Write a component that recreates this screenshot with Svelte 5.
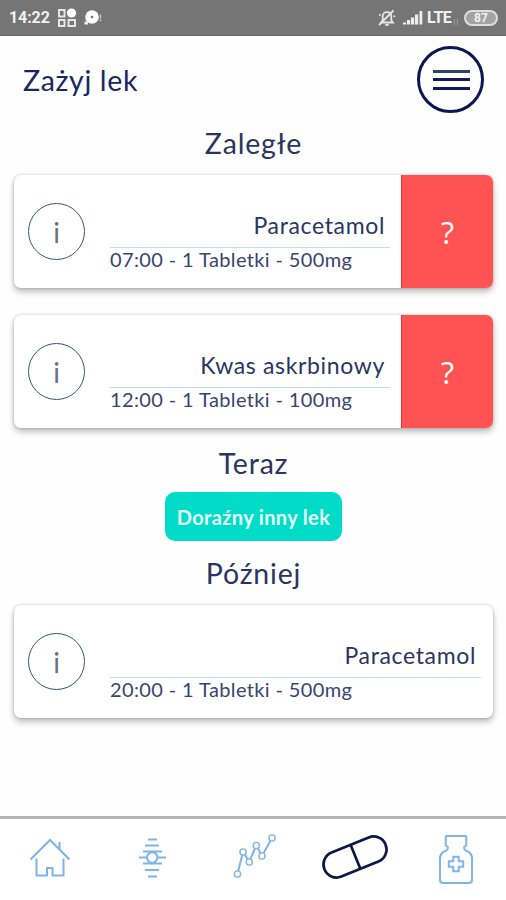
<script lang="ts">
	type Dose = { name: string; time: string; details: string };

	const overdue: Dose[] = [
		{ name: 'Paracetamol', time: '07:00', details: '1 Tabletki - 500mg' },
		{ name: 'Kwas askrbinowy', time: '12:00', details: '1 Tabletki - 100mg' }
	];

	const later: Dose[] = [
		{ name: 'Paracetamol', time: '20:00', details: '1 Tabletki - 500mg' }
	];
</script>

{#snippet card(dose: Dose, late: boolean)}
	<article class="card">
		<button class="info">i</button>
		<div class="dose">
			<div class="name">{dose.name}</div>
			<div class="details">{dose.time} - {dose.details}</div>
		</div>
		{#if late}
			<button class="confirm">?</button>
		{/if}
	</article>
{/snippet}

<div class="screen">
	<div class="status-bar">
		<span class="clock">14:22</span>
		<svg class="apps" width="20" height="20" viewBox="0 0 20 20" fill="none" stroke="#e6e6e6" stroke-width="2">
			<rect x="2" y="2" width="5.5" height="6.5" />
			<circle cx="14.5" cy="5" r="4.6" fill="#fff" stroke="none" />
			<rect x="2" y="12" width="5.5" height="6" />
			<rect x="11.5" y="12" width="6.5" height="6" />
		</svg>
		<svg class="disc" width="18" height="18" viewBox="0 0 18 18">
			<circle cx="8" cy="8" r="6.8" fill="#fff" />
			<path d="M.5 12.5h3.5v3H.5z" fill="#eee" />
			<circle cx="8" cy="8" r="1.3" fill="#757575" />
			<path d="M16.5 5.5v4M16.5 10.5v1.5" stroke="#c4c4c4" stroke-width="1.5" />
		</svg>
		<span class="spacer"></span>
		<svg width="18" height="18" viewBox="0 0 18 18" fill="none" stroke="#e6e6e6" stroke-width="1.8">
			<path d="M3 13.5h12l-1.7-2.3V7.3C13.3 4.9 11.5 3.2 9 3.2S4.7 4.9 4.7 7.3v3.9L3 13.5zM7.2 15.8h3.6M1 16L15.5 1.5M1.2 5.5l1.4 1M15.5 7.5l1.7-.5" />
		</svg>
		<svg class="signal" width="20" height="15" viewBox="0 0 20 15" fill="#eee">
			<path d="M0 12.5h3.2v2H0zM4 10h3.2v4.5H4zM8 7.5h3.2v7H8zM12 4.5h3.2v10h-3.2z" />
			<path d="M16.5 1h2.8v13.5h-2.8z" />
		</svg>
		<span class="lte">LTE</span>
		<svg class="arrows" width="6" height="8" viewBox="0 0 6 8" stroke="#9b9b9b" fill="none">
			<path d="M1.5 1v6M4.5 1v6" />
		</svg>
		<span class="battery">87</span>
	</div>

	<header>
		<h1>Zażyj lek</h1>
		<button class="menu" aria-label="Menu">
			<span></span>
			<span></span>
			<span></span>
		</button>
	</header>

	<main>
		<h2>Zaległe</h2>
		<div class="list">
			{#each overdue as dose}
				{@render card(dose, true)}
			{/each}
		</div>

		<h2 class="h-now">Teraz</h2>
		<button class="other">Doraźny inny lek</button>

		<h2 class="h-later">Później</h2>
		<div class="list">
			{#each later as dose}
				{@render card(dose, false)}
			{/each}
		</div>
	</main>

	<nav>
		<svg width="100" height="80" viewBox="0 0 100 80" class="light">
			<path d="M30.5 40.5L50 21l19.5 19.5M59.5 30v-7M36.5 39.5V56.5H47V49h5.5V56.5H63.5V39.5" />
		</svg>
		<svg width="102" height="80" viewBox="100 0 102 80" class="light">
			<path d="M148 20.5h9M145 26.5h14M143 32.5h19M139 38.5h8.5M157.500 38.5h8.5M143 44.5h19M145 51h14M148 57.5h9" />
			<circle cx="152.2" cy="38.5" r="5.2" fill="#fff" />
		</svg>
		<svg width="106" height="80" viewBox="202 0 106 80" class="light">
			<path d="M237.5 55L243 33L249.3 42.5L256.3 26.5L262 37L272 19" />
			<g class="dots">
				<circle cx="237.5" cy="55" r="3.1" />
				<circle cx="243" cy="33" r="3.1" />
				<circle cx="249.3" cy="43" r="3.1" />
				<circle cx="256.3" cy="26.5" r="3.1" />
				<circle cx="262" cy="37" r="3.1" />
				<circle cx="272" cy="19" r="3.1" />
			</g>
		</svg>
		<svg width="96" height="80" viewBox="308 0 96 80" class="active">
			<g transform="rotate(-22 355 38)">
				<rect x="322" y="25" width="66" height="26" rx="13" />
				<path d="M355.5 25v26" />
			</g>
		</svg>
		<svg width="102" height="80" viewBox="404 0 102 80" class="light">
			<path d="M446.5 17h19q.8 0 .8.800v8.7l-2 1.2v2.3q0 1 2 1.8q5.700 2 5.700 8v21.2q0 3-3.5 3h-25q-3.5 0-3.5-3V39.800q0-6 5.700-8q2-.8 2-1.8v-2.3l-2-1.2v-8.7q0-.8.8-.8z" />
			<path d="M453.300 37.800h5.4v4.5h4.5v5.4h-4.500v4.5h-5.4v-4.5h-4.5v-5.4h4.5z" />
		</svg>
	</nav>
</div>

<style>
	:global(body) {
		margin: 0;
		background: #fff;
	}

	.screen {
		display: flex;
		flex-direction: column;
		width: 506px;
		height: 900px;
		overflow: hidden;
		background: #fefefe;
		color: #2a3560;
		font-family: Lato, 'Open Sans', sans-serif;
	}

	button {
		border: 0;
		padding: 0;
		font-family: inherit;
		color: inherit;
		background: none;
	}

	.status-bar {
		display: flex;
		align-items: center;
		box-sizing: border-box;
		height: 36px;
		padding: 0 8px 0 9px;
		border-bottom: 1px solid #666;
		background: #757575;
		color: #f1f1f1;
		font-family: Roboto, sans-serif;
		font-weight: 700;
	}

	.clock {
		width: 41px;
		font-size: 16px;
		letter-spacing: -0.1px;
	}

	.apps {
		margin-left: 7px;
	}

	.disc {
		margin-left: 7px;
	}

	.spacer {
		flex: 1;
	}

	.signal {
		margin-left: 7px;
	}

	.lte {
		margin-left: 4px;
		width: 26px;
		font-size: 16px;
		letter-spacing: -0.5px;
	}

	.arrows {
		margin: 8px 5px 0 0;
	}

	.battery {
		box-sizing: border-box;
		width: 34px;
		height: 16px;
		border: 2px solid #dedede;
		border-radius: 8px;
		background: #a3a3a3;
		font-size: 12px;
		line-height: 12px;
		text-align: center;
	}

	header {
		display: flex;
		align-items: center;
		justify-content: space-between;
		height: 87px;
		padding: 0 22px 0 23px;
	}

	h1 {
		margin: 1px 0 0;
		font-size: 28.5px;
		font-weight: 400;
		letter-spacing: 0.65px;
		color: #1b2760;
	}

	.menu {
		display: flex;
		flex-direction: column;
		align-items: center;
		justify-content: center;
		gap: 5.5px;
		box-sizing: border-box;
		width: 67px;
		height: 67px;
		border: 3px solid #0c1650;
		border-radius: 50%;
	}

	.menu span {
		width: 37px;
		height: 3px;
		margin-left: 1px;
		background: #14195a;
	}

	.menu span:first-child {
		background: #2b4468;
	}

	main {
		flex: 1;
		padding: 0 13px 0 14px;
		text-align: center;
	}

	h2 {
		margin: 0;
		padding-top: 1px;
		font-size: 28.5px;
		font-weight: 400;
		line-height: 39px;
		letter-spacing: 0.8px;
	}

	.list {
		display: flex;
		flex-direction: column;
		gap: 27px;
		margin-top: 12px;
	}

	.h-now {
		margin-top: 15px;
	}

	.other {
		width: 177px;
		height: 49px;
		margin-top: 9px;
		border-radius: 10px;
		background: #00dcc8;
		color: #e4fffa;
		font-size: 20px;
		font-weight: 700;
		letter-spacing: 0.35px;
		vertical-align: top;
	}

	.h-later {
		margin-top: 12px;
	}

	.card {
		display: flex;
		height: 113px;
		border-radius: 7px;
		overflow: hidden;
		background: #fff;
		box-shadow: 0 4px 6px rgba(0, 0, 0, 0.25), 0 0 3px rgba(0, 0, 0, 0.22);
	}

	.info {
		box-sizing: border-box;
		width: 57px;
		height: 57px;
		margin: 28px 25px 0 14px;
		border: 1.5px solid #42506f;
		border-radius: 50%;
		color: #6a7186;
		font-size: 28px;
		line-height: 56px;
	}

	.dose {
		flex: 1;
		margin-right: 12px;
	}

	.name {
		box-sizing: border-box;
		height: 73px;
		padding: 35px 5px 0 0;
		border-bottom: 1px solid #c3dcf6;
		font-size: 23px;
		line-height: 30px;
		letter-spacing: 0.65px;
		text-align: right;
	}

	.details {
		font-size: 20px;
		line-height: 22px;
		letter-spacing: 0.38px;
		text-align: left;
		color: #39456c;
	}

	.confirm {
		width: 92px;
		margin-left: -1px;
		border-left: 1px solid #f02c38;
		background: #ff5252;
		color: #fff;
		font-family: 'Open Sans', sans-serif;
		font-size: 31px;
	}

	nav {
		display: flex;
		height: 81px;
		border-top: 3px solid #b3b3b3;
		background: #fff;
	}

	nav svg {
		fill: none;
	}

	.light {
		stroke: #7fb4e6;
		stroke-width: 2;
	}

	.dots {
		fill: #fff;
		stroke-width: 1.4;
	}

	.active {
		stroke: #0d1748;
		stroke-width: 2.7;
	}
</style>
